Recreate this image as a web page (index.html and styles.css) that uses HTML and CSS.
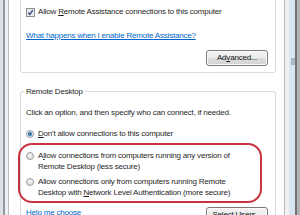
FILE: index.html
```html
<!DOCTYPE html>
<html>
<head>
<meta charset="utf-8">
<link rel="stylesheet" href="styles.css">
</head>
<body>
<div class="window">
  <div class="frame-left"></div>
  <div class="page">
    <div class="group group-top">
      <div class="row check-row">
        <span class="checkbox">
          <svg width="9" height="9" viewBox="0 0 9 9"><rect x="0.5" y="0.5" width="8" height="8" fill="#f1f3f6" stroke="#8e8f8f"/><rect x="1.5" y="1.5" width="6" height="6" fill="#dfe4ea"/><path d="M2.3 4.6 L3.8 6.4 L6.8 2.2" fill="none" stroke="#3b4d75" stroke-width="1.4"/></svg>
        </span>
        <span class="label">Allow <u>R</u>emote Assistance connections to this computer</span>
      </div>
      <div class="row link-row"><span class="link">What happens when I enable Remote Assistance?</span></div>
      <div class="btn-row"><span class="btn">Ad<u>v</u>anced...</span></div>
    </div>

    <div class="group group-rd">
      <div class="legend">Remote Desktop</div>
      <div class="row hint">Click an option, and then specify who can connect, if needed.</div>
      <div class="row radio-row first">
        <span class="radio on"></span>
        <span class="label"><u>D</u>on't allow connections to this computer</span>
      </div>
      <div class="highlight">
        <div class="radio-row option">
          <span class="radio"></span>
          <span class="label">A<u>l</u>low connections from computers running any version of<br>Remote Desktop (less secure)</span>
        </div>
        <div class="radio-row option">
          <span class="radio"></span>
          <span class="label">Allow connections only from computers running Remote<br>Desktop with <u>N</u>etwork Level Authentication (more secure)</span>
        </div>
      </div>
      <div class="bottom-row">
        <span class="link">Help me choose</span>
        <span class="btn">Select Users...</span>
      </div>
    </div>
  </div>
  <div class="frame-right"><div class="grip"></div></div>
</div>
</body>
</html>
```

FILE: styles.css
```css
html, body {
  margin: 0;
  padding: 0;
  background: #ffffff;
  overflow: hidden;
}

.window {
  display: flex;
  width: 300px;
  height: 215px;
  font-family: "Liberation Sans", Arial, sans-serif;
  font-size: 8px;
  letter-spacing: -0.2px;
  color: #1f1f1f;
}

.frame-left {
  width: 9px;
  flex: none;
  background: linear-gradient(to right,
    #dde2e8 0, #dde2e8 3px,
    #929aa3 3px, #929aa3 5px,
    #eef0f3 5px, #eef0f3 8px,
    #bcbcbc 8px, #bcbcbc 9px);
}

.page {
  width: 276px;
  flex: none;
  padding-left: 11px;
  padding-right: 8px;
  box-sizing: border-box;
  border-right: 1px solid #b8b8b8;
  background: #ffffff;
}

.frame-right {
  flex: 1;
  position: relative;
  background: linear-gradient(to right,
    #f0f1f2 0, #f0f1f2 4px,
    #d9e5f1 4px, #d9e5f1 10px,
    #737373 10px, #737373 12px,
    #b3b3b3 12px);
}

.grip {
  position: absolute;
  left: 6px;
  top: 58px;
  width: 4px;
  height: 7px;
  background: #a9b6c4;
}

.group {
  border: 1px solid #d5dcdf;
  border-radius: 3px;
  padding: 0 7px 0 5px;
}

.group-top {
  border-top: none;
  border-top-left-radius: 0;
  border-top-right-radius: 0;
  padding-top: 6px;
  padding-bottom: 6px;
}

.row {
  height: 12px;
  line-height: 12px;
  white-space: nowrap;
}

.check-row {
  display: flex;
  align-items: center;
}

.checkbox {
  width: 9px;
  height: 9px;
  margin-right: 3px;
  display: block;
}

.checkbox svg {
  display: block;
}

.link-row {
  margin-top: 12px;
}

.link {
  color: #0066cc;
  text-decoration: underline;
  line-height: 12px;
  white-space: nowrap;
}

.btn-row {
  display: flex;
  justify-content: flex-end;
  margin-top: 8px;
}

.btn {
  display: block;
  width: 62px;
  height: 16px;
  box-sizing: border-box;
  border: 1px solid #7a7a7a;
  border-radius: 3px;
  background: linear-gradient(#f4f4f4 0%, #ececec 48%, #dedede 52%, #d1d1d1 100%);
  box-shadow: inset 0 0 0 1px #fbfbfb;
  text-align: center;
  line-height: 14px;
  color: #111;
  white-space: nowrap;
}

.group-rd {
  margin-top: 18px;
  border-bottom: none;
  padding-bottom: 0;
}

.legend {
  width: fit-content;
  margin-top: -6px;
  margin-left: -2px;
  padding: 0 2px;
  height: 12px;
  line-height: 12px;
  background: #ffffff;
}

.hint {
  margin-top: 9px;
}

.radio-row {
  display: flex;
  align-items: center;
}

.radio-row.first {
  margin-top: 9px;
}

.radio {
  flex: none;
  width: 8px;
  height: 8px;
  box-sizing: border-box;
  margin-right: 4px;
  border-radius: 50%;
  border: 1px solid #9a9ea3;
  background: radial-gradient(circle at 50% 40%, #f6f6f6 0, #dedfe1 70%, #cfd1d4 100%);
}

.radio.on {
  background: radial-gradient(circle, #2e6aa0 0, #4f86b8 45%, #e6ebf0 55%, #d3d7dc 100%);
}

.highlight {
  margin-top: 3px;
  margin-left: -8px;
  margin-right: 6px;
  border: 2px solid #c8343e;
  border-radius: 14px;
  padding: 5px 0 3px 6px;
}

.option {
  align-items: flex-start;
  line-height: 11px;
  white-space: nowrap;
}

.option + .option {
  margin-top: 4px;
}

.option .radio {
  margin-top: 2px;
}

.bottom-row {
  display: flex;
  justify-content: space-between;
  align-items: flex-start;
  margin-top: 4px;
}
```
